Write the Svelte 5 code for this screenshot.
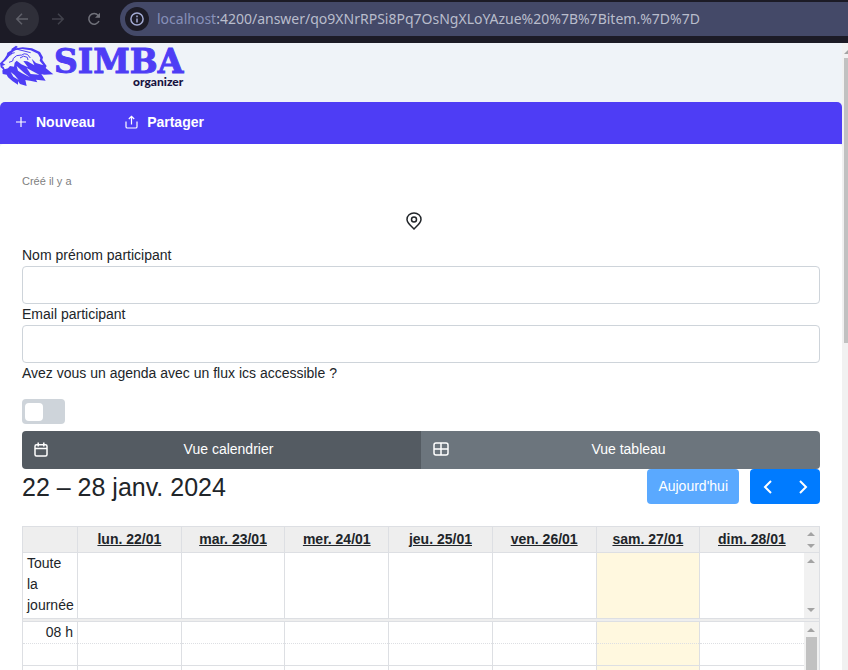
<script>
  const days = ['lun. 22/01', 'mar. 23/01', 'mer. 24/01', 'jeu. 25/01', 'ven. 26/01', 'sam. 27/01', 'dim. 28/01'];
  const today = 5;
  const slots = [
    { label: '08 h', minor: true },
    { label: '', minor: false },
    { label: '', minor: true }
  ];
  let view = $state('calendar');
  let hasIcs = $state(false);
  let name = $state('');
  let email = $state('');
</script>

<div class="window">
  <div class="browser">
    <button class="nav back" aria-label="Précédent">
      <svg width="14" height="14" viewBox="0 0 14 14"><path d="M13 7H2M7 1.8 1.8 7 7 12.2" /></svg>
    </button>
    <button class="nav forward" aria-label="Suivant">
      <svg width="14" height="14" viewBox="0 0 14 14"><path d="M1 7h11M7 1.8 12.2 7 7 12.2" /></svg>
    </button>
    <button class="nav reload" aria-label="Actualiser">
      <svg width="14" height="14" viewBox="0 0 14 14"><path d="M12 9a5.3 5.3 0 1 1-.8-5.6L12.4 5" /><path class="fill" d="M13 .8v5H8z" /></svg>
    </button>
    <div class="address">
      <span class="info">
        <svg width="14" height="14" viewBox="0 0 14 14"><circle cx="7" cy="7" r="6.1" /><path d="M7 6.4v4M7 3.5v1.7" /></svg>
      </span>
      <span class="url"><span class="host">localhost</span>:4200/answer/qo9XNrRPSi8Pq7OsNgXLoYAzue%20%7B%7Bitem.%7D%7D</span>
    </div>
  </div>

  <div class="viewport">
    <div class="page">
      <header class="brand">
        <svg class="lion" width="54" height="44" viewBox="0 0 162 132">
          <path
            class="mane"
            d="M35 14 48 5 54 9 48 13 68 10 96 13 120 24 129 40 127 48 140 66 137 72 160 91 132 92 124 90 137 110 108 107 112 115 90 110 76 108 80 126 60 120 54 112 54 122 38 112 24 100 20 92 8 90 7 80 9 76 2 70 0 58 12 46 20 34 22 26 34 19Z"
          />
          <path
            class="light"
            d="M46 19 66 15 92 19 114 29 121 42 119 50 130 64 108 57 95 44 103 64 82 52 70 51 84 70 64 61 50 50 44 56 42 68 30 66 24 73 14 76 11 69 6 66 16 62 8 57 18 48 28 36 34 26Z"
          />
          <path class="light" d="M50 66 54 80 66 88 90 100 72 86ZM80 72 92 90 118 92 98 82ZM32 84 40 98 56 108 44 94Z" />
          <path class="line" d="M24 38q8-12 20-12M27 55l11-4 2-8 10-8 14-2M36 24l-4 10M60 42q10-10 22-2l2 8M64 34q8-8 18-3l9 11M12 79l14-2M52 16l40 10" />
        </svg>
        <div class="wordmark">
          <span class="simba">SIMBA</span>
          <span class="organizer">organizer</span>
        </div>
      </header>

      <nav class="menu">
        <a href="#nouveau">
          <svg width="12" height="12" viewBox="0 0 12 12"><path d="M6 1v10M1 6h10" /></svg>
          Nouveau
        </a>
        <a href="#partager">
          <svg width="13" height="14" viewBox="0 0 13 14"><path d="M1 6.5v5.2q0 1.3 1.3 1.3h8.4q1.3 0 1.3-1.3V6.5M6.5 9.5v-8M3.8 4 6.5 1.3 9.2 4" /></svg>
          Partager
        </a>
      </nav>

      <main>
        <p class="created">Créé il y a</p>
        <div class="place">
          <svg width="16" height="18" viewBox="0 0 16 18"><path d="M8 17C4.5 13.5 1 10.8 1 7.4a7 6.5 0 0 1 14 0C15 10.8 11.5 13.5 8 17Z" /><circle cx="8" cy="7.5" r="2.5" /></svg>
        </div>

        <label for="name">Nom prénom participant</label>
        <input id="name" class="field" type="text" bind:value={name} />
        <label for="email">Email participant</label>
        <input id="email" class="field" type="email" bind:value={email} />
        <label for="ics">Avez vous un agenda avec un flux ics accessible ?</label>
        <input id="ics" class="switch" type="checkbox" role="switch" bind:checked={hasIcs} />

        <div class="views">
          <button class:active={view === 'calendar'} onclick={() => (view = 'calendar')}>
            <svg width="14" height="15" viewBox="0 0 14 15"><rect x="1" y="2.7" width="12" height="11.3" rx="1.5" /><path d="M1 6.500h12M4.200.500v4M9.800.500v4" /></svg>
            <span>Vue calendrier</span>
          </button>
          <button class:active={view === 'table'} onclick={() => (view = 'table')}>
            <svg width="16" height="14" viewBox="0 0 16 14"><rect x="1" y="1" width="14" height="12" rx="2" /><path d="M1 7h14M8 1v12" /></svg>
            <span>Vue tableau</span>
          </button>
        </div>

        <div class="toolbar">
          <h2>22 – 28 janv. 2024</h2>
          <div class="controls">
            <button class="today" disabled>Aujourd'hui</button>
            <div class="steps">
              <button aria-label="Semaine précédente">
                <svg width="10" height="14" viewBox="0 0 10 14"><path d="M8 1 2 7l6 6" /></svg>
              </button>
              <button aria-label="Semaine suivante">
                <svg width="10" height="14" viewBox="0 0 10 14"><path d="m2 1 6 6-6 6" /></svg>
              </button>
            </div>
          </div>
        </div>

        <table>
          <colgroup>
            <col class="axis" />
            {#each days as day (day)}<col />{/each}
            <col class="bar" />
          </colgroup>
          <thead>
            <tr>
              <td></td>
              {#each days as day, i (day)}<th scope="col" class:last={i === 6}><a href="#{day}">{day}</a></th>{/each}
              <td class="scroll"><div class="ends"><i class="up"></i><i class="down"></i></div></td>
            </tr>
          </thead>
          <tbody>
            <tr class="allday">
              <th scope="row">Toute la journée</th>
              {#each days as day, i (day)}<td class:current={i === today} class:last={i === 6}></td>{/each}
              <td class="scroll"><div class="ends"><i class="up"></i><i class="down"></i></div></td>
            </tr>
            <tr class="divider"><td colspan="9"></td></tr>
            {#each slots as slot, n}
              <tr class="slot" class:minor={slot.minor}>
                <th scope="row">{slot.label}</th>
                {#each days as day, i (day)}<td class:current={i === today} class:last={i === 6}></td>{/each}
                {#if n === 0}
                  <td class="scroll" rowspan={slots.length}><div class="ends"><i class="up"></i><b></b></div></td>
                {/if}
              </tr>
            {/each}
          </tbody>
        </table>
      </main>
    </div>
    <div class="pagebar"><i class="up"></i><b></b></div>
  </div>
</div>

<style>
  :global(body) {
    margin: 0;
  }
  .window {
    display: flex;
    flex-direction: column;
    height: 100vh;
    overflow: hidden;
    font-family: 'Liberation Sans', Arial, sans-serif;
    font-size: 14px;
    line-height: 21px;
    color: #212529;
  }
  .window * {
    box-sizing: border-box;
  }
  button {
    font: inherit;
    border: 0;
    padding: 0;
    cursor: pointer;
  }
  svg {
    flex: none;
    display: block;
  }
  svg path,
  svg circle,
  svg rect {
    stroke-width: 1.5;
  }

  .browser {
    flex: none;
    display: flex;
    align-items: center;
    height: 43px;
    padding: 0 0 6px 5px;
    background: #1c1b26;
  }
  .nav {
    display: grid;
    place-items: center;
    width: 34px;
    height: 34px;
    margin-right: 2px;
    border-radius: 50%;
    background: none;
    color: #41424c;
  }
  .nav svg {
    fill: none;
    stroke: currentColor;
  }
  .nav .fill {
    fill: currentColor;
    stroke: none;
  }
  .back {
    background: #2f2f39;
    color: #60616a;
  }
  .reload {
    color: #70717a;
    margin-right: 9px;
  }
  .address {
    flex: 1;
    display: flex;
    align-items: center;
    gap: 8px;
    height: 34px;
    padding-left: 5px;
    border-radius: 17px 0 0 17px;
    background: #444968;
    font-family: 'Noto Sans', sans-serif;
    font-size: 14px;
    color: #b9bdcc;
    white-space: nowrap;
    overflow: hidden;
  }
  .host {
    color: #8790b9;
  }
  .info {
    display: grid;
    place-items: center;
    width: 24px;
    height: 24px;
    border-radius: 50%;
    background: #1c1b26;
  }
  .info svg {
    fill: none;
    stroke: #a3abd4;
  }

  .viewport {
    flex: 1;
    min-height: 0;
    display: flex;
  }
  .page {
    flex: 1;
    min-width: 0;
    overflow: hidden;
    background: #eff3f8;
  }
  .pagebar {
    flex: none;
    display: flex;
    flex-direction: column;
    width: 6px;
    padding: 7px 0 0 2px;
    background: #f1f1f1;
    overflow: hidden;
  }
  .pagebar b {
    height: 46%;
    margin-top: 4px;
    background: #c1c1c1;
  }

  .brand {
    display: flex;
    align-items: flex-start;
    height: 59px;
    padding-top: 1px;
  }
  .mane {
    fill: #4e3df5;
  }
  .light {
    fill: #eff3f8;
  }
  .lion .line {
    fill: none;
    stroke: #4e3df5;
    stroke-width: 3;
  }
  .wordmark {
    display: flex;
    flex-direction: column;
    align-items: flex-end;
    padding-top: 2px;
  }
  .simba {
    font: bold 33px/32px 'DejaVu Serif', serif;
    color: #4e3df5;
    -webkit-text-stroke: 1px #4e3df5;
  }
  .organizer {
    margin-top: -2px;
    font: 900 12px/12px Lato, sans-serif;
    color: #17123f;
  }

  .menu {
    display: flex;
    align-items: center;
    gap: 30px;
    height: 42px;
    padding: 0 15px 2px;
    border-radius: 5px 5px 0 0;
    background: #4e3df5;
  }
  .menu a {
    display: flex;
    align-items: center;
    gap: 9px;
    color: #fff;
    font-weight: bold;
    text-decoration: none;
  }
  .menu svg {
    fill: none;
    stroke: #fff;
  }
  .menu svg path {
    stroke-width: 1.2;
  }

  main {
    display: flex;
    flex-direction: column;
    padding: 27px 22px 0;
    border-radius: 4px 4px 0 0;
    background: #fff;
  }
  .created {
    margin: 0;
    font-size: 11px;
    color: #808080;
  }
  .place {
    display: flex;
    justify-content: center;
    margin: 20px 14px 15px 0;
  }
  .place svg {
    fill: none;
    stroke: #212529;
  }
  .field {
    height: 38px;
    padding: 6px 12px;
    border: 1px solid #ced4da;
    border-radius: 4px;
    background: #fff;
    font: inherit;
    color: inherit;
  }
  .switch {
    appearance: none;
    display: flex;
    align-items: center;
    width: 43px;
    height: 25px;
    margin: 15px 0 7px;
    padding: 3px;
    border-radius: 4px;
    background: #ced4da;
  }
  .switch::before {
    content: '';
    width: 18px;
    height: 18px;
    border-radius: 4px;
    background: #fff;
  }
  .switch:checked {
    justify-content: flex-end;
    background: #4e3df5;
  }

  .views {
    display: flex;
    border-radius: 4px;
    overflow: hidden;
  }
  .views button {
    flex: 1;
    display: flex;
    align-items: center;
    height: 38px;
    padding: 0 12px 2px;
    background: #6c757d;
    color: #fff;
  }
  .views button.active {
    background: #545b62;
  }
  .views span {
    flex: 1;
    text-align: center;
  }
  .views svg {
    fill: none;
    stroke: #fff;
  }

  .toolbar {
    display: flex;
    align-items: center;
    justify-content: space-between;
    margin-bottom: 22px;
  }
  h2 {
    margin: 0;
    font-size: 25px;
    font-weight: normal;
    line-height: 30px;
  }
  .controls {
    display: flex;
    gap: 11px;
  }
  .today {
    height: 35px;
    padding: 0 11px;
    border-radius: 4px;
    background: #5aa9ff;
    color: #fff;
  }
  .steps {
    display: flex;
    border-radius: 4px;
    overflow: hidden;
    background: #007bff;
  }
  .steps button {
    display: grid;
    place-items: center;
    width: 35px;
    height: 35px;
    background: none;
  }
  .steps svg {
    fill: none;
    stroke: #fff;
  }
  .steps path {
    stroke-width: 2;
  }

  table {
    width: 100%;
    table-layout: fixed;
    border-collapse: collapse;
  }
  .axis {
    width: 55px;
  }
  .bar {
    width: 16px;
  }
  th,
  td {
    padding: 0;
    border: 1px solid #dddfe3;
  }
  thead tr {
    height: 26px;
    background: #eee;
  }
  thead a {
    color: #212529;
  }
  tbody th {
    padding: 0 4px;
    font-weight: normal;
    text-align: right;
    vertical-align: top;
  }
  .allday {
    height: 66px;
  }
  .allday th {
    text-align: left;
  }
  .current {
    background: #fff8df;
  }
  .divider td {
    height: 3px;
    background: #eee;
  }
  .slot {
    height: 22px;
  }
  .minor th,
  .minor td:not(.scroll) {
    border-bottom-style: dotted;
  }
  .minor + .slot th,
  .minor + .slot td {
    border-top: 0;
  }
  .last {
    border-right: 0;
  }
  .scroll {
    height: inherit;
    border-left: 0;
    border-bottom: 0;
    background: #f1f1f1;
    vertical-align: top;
  }
  thead .scroll {
    background: #eee;
  }
  .ends {
    display: flex;
    flex-direction: column;
    align-items: center;
    justify-content: space-between;
    height: 100%;
    padding: 6px 0;
  }
  thead .ends {
    height: 25px;
    padding: 5px 0 4px;
  }
  .allday .ends {
    height: 65px;
  }
  .slot .ends {
    justify-content: flex-start;
    gap: 5px;
    height: 66px;
    padding-bottom: 0;
  }
  .ends b {
    flex: 1;
    width: 11px;
    background: #c1c1c1;
  }
  .up,
  .down {
    flex: none;
    width: 0;
    height: 0;
    border: 4px solid transparent;
  }
  .up {
    border-top: 0;
    border-bottom-color: #a3a3a3;
  }
  .down {
    border-bottom: 0;
    border-top-color: #a3a3a3;
  }
</style>
